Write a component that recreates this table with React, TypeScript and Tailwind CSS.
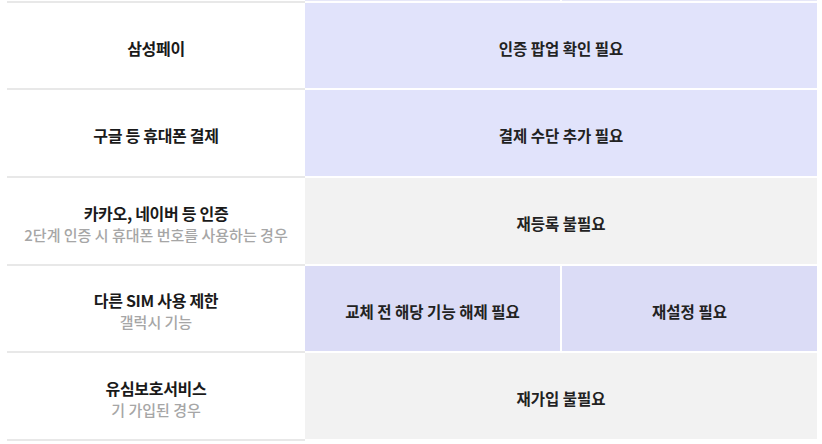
import React from "react";

type Row = {
  title: string;
  sub?: string;
  cells: string[];
  tone: "blue" | "gray" | "deep";
  h: string;
};

const rows: Row[] = [
  { title: "삼성페이", cells: ["인증 팝업 확인 필요"], tone: "blue", h: "h-[87px]" },
  { title: "구글 등 휴대폰 결제", cells: ["결제 수단 추가 필요"], tone: "blue", h: "h-[88px]" },
  {
    title: "카카오, 네이버 등 인증",
    sub: "2단계 인증 시 휴대폰 번호를 사용하는 경우",
    cells: ["재등록 불필요"],
    tone: "gray",
    h: "h-[88px]",
  },
  {
    title: "다른 SIM 사용 제한",
    sub: "갤럭시 기능",
    cells: ["교체 전 해당 기능 해제 필요", "재설정 필요"],
    tone: "deep",
    h: "h-[87px]",
  },
  {
    title: "유심보호서비스",
    sub: "기 가입된 경우",
    cells: ["재가입 불필요"],
    tone: "gray",
    h: "h-[88px]",
  },
];

const toneBg = {
  blue: "bg-[#e1e3fb]",
  gray: "bg-[#f2f2f2]",
  deep: "bg-[#dbdcf6]",
};

const App = () => {
  return (
    <div
      className="w-[822px] h-[444px] overflow-hidden bg-white pl-[7px]"
      style={{ fontFamily: '"Noto Sans CJK KR", "Noto Sans", sans-serif' }}
    >
      <div className="w-[810px]">
        {/* tail of the row above */}
        <div className="grid grid-cols-[298px_512px]">
          <div className="h-[3px] bg-white border-b-2 border-[#e8e8e8]" />
          <div className="h-[3px] flex gap-[2px] border-b-2 border-white">
            <div className="flex-1 bg-[#e6e7f8]" />
            <div className="flex-1 bg-[#e6e7f8]" />
          </div>
        </div>

        {rows.map((row) => (
          <div key={row.title} className="grid grid-cols-[298px_512px]">
            {/* label */}
            <div
              className={`${row.h} border-b-2 border-[#e8e8e8] flex flex-col items-center justify-center text-center pt-[4px]`}
            >
              <div className="text-[16px] leading-[22px] font-bold text-[#1a1a1a] tracking-[-0.3px]">
                {row.title}
              </div>
              {row.sub && (
                <div className="text-[15px] leading-[21px] font-medium text-[#a6a6a6]">
                  {row.sub}
                </div>
              )}
            </div>

            {/* result */}
            <div className={`${row.h} border-b-2 border-white flex gap-[2px]`}>
              {row.cells.map((c) => (
                <div
                  key={c}
                  className={`flex-1 flex items-center justify-center pt-[6px] ${toneBg[row.tone]} text-[15.5px] font-bold text-[#222]`}
                >
                  {c}
                </div>
              ))}
            </div>
          </div>
        ))}
      </div>
    </div>
  );
};

export default App;
